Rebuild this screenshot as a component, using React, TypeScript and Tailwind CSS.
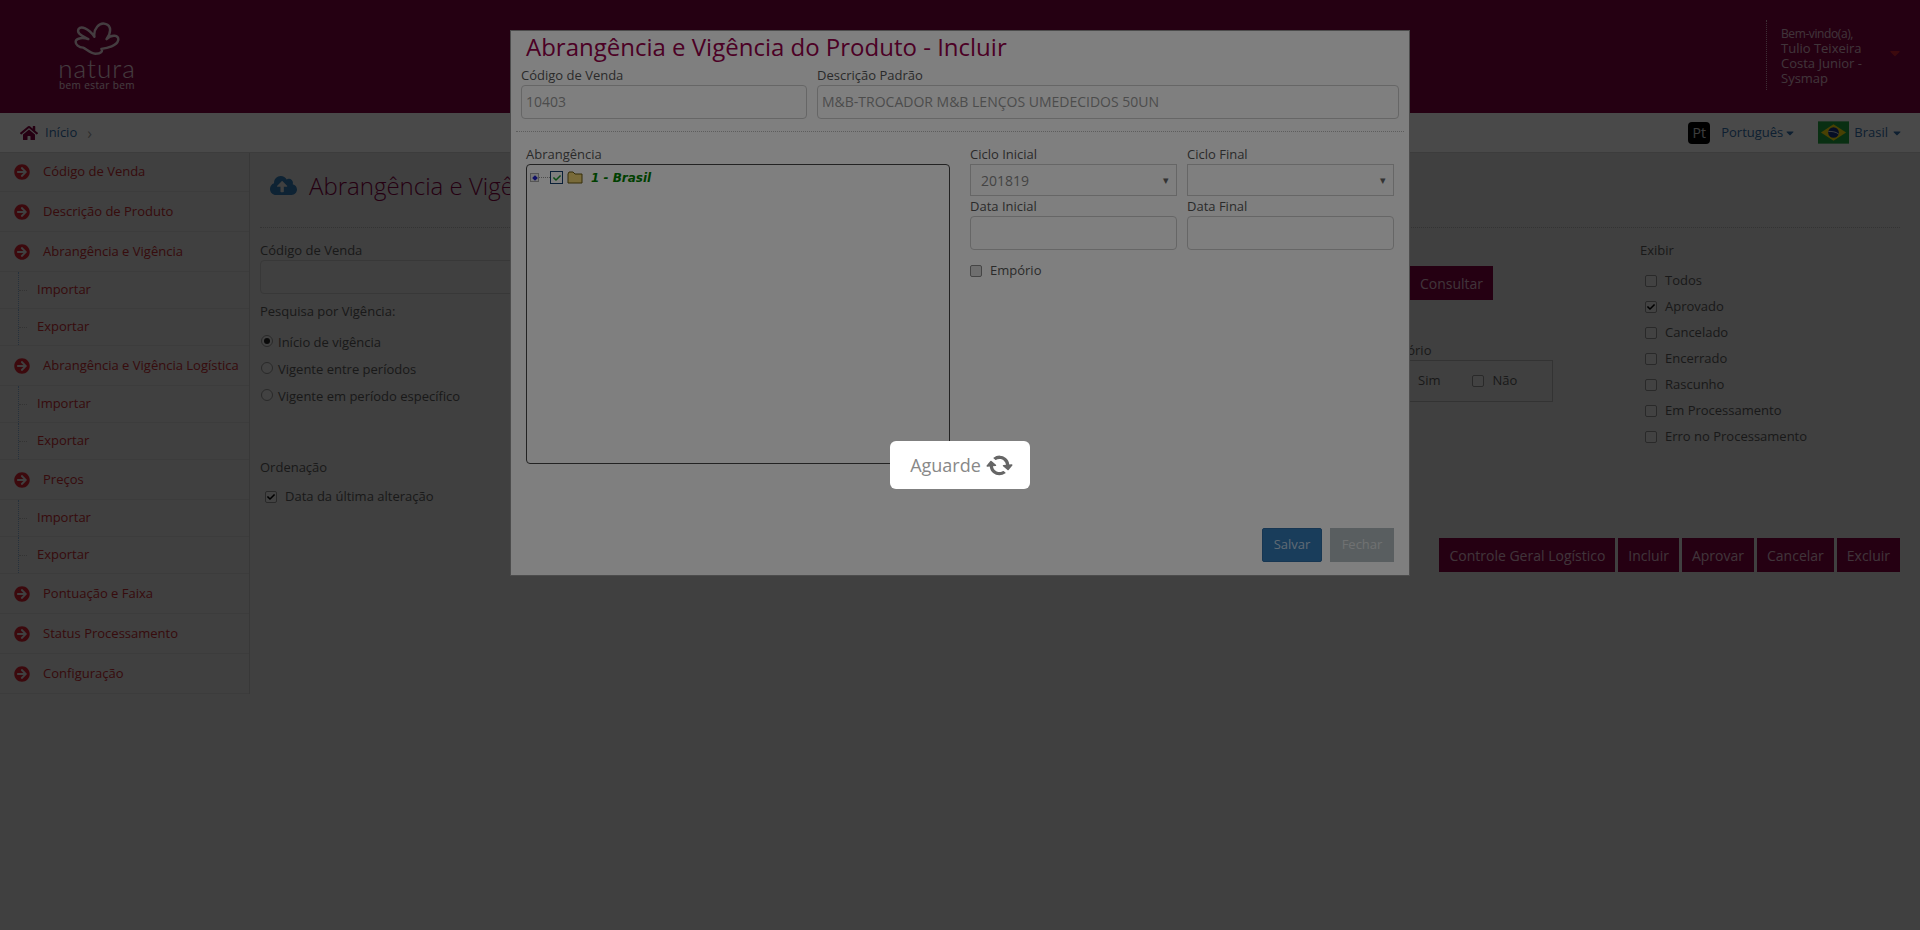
import React from "react";
import { FaArrowCircleRight, FaHome, FaCloudUploadAlt, FaCheck, FaCaretDown } from "react-icons/fa";

const font = { fontFamily: '"Open Sans", sans-serif' };

function Top({ label, first }: { label: string; first?: boolean }) {
  return (
    <div className={`flex items-center border-b border-[#c8c8c8] ${first ? "h-[39px] pb-[1px]" : "h-[40px]"}`}>
      <FaArrowCircleRight className="ml-[14px] text-[16px] text-[#c8202e]" />
      <span className="ml-[13px] text-[13px] text-[#b8282e] whitespace-nowrap">{label}</span>
    </div>
  );
}

function Sub({ label }: { label: string }) {
  return (
    <div className="flex items-center h-[37px] border-b border-[#c8c8c8] pl-[18px]">
      <span className="h-full border-l border-dotted border-[#7fa6c9]" />
      <span className="w-[8px] border-t border-dotted border-[#aaa]" />
      <span className="ml-[10px] text-[13px] text-[#b8282e]">{label}</span>
    </div>
  );
}

function Check({ on, className = "" }: { on?: boolean; className?: string }) {
  return (
    <span className={`inline-flex items-center justify-center w-[12px] h-[12px] rounded-[2px] border border-[#8a8a8a] bg-[#dcdcdc] shrink-0 ${className}`}>
      {on && <FaCheck className="text-[8px] text-black" />}
    </span>
  );
}

function Radio({ on, label }: { on?: boolean; label: string }) {
  return (
    <div className="flex items-center h-[27px] ml-[1px]">
      <span className="w-[12px] h-[12px] mb-[3px] rounded-full border border-[#8a8a8a] bg-[#dcdcdc] flex items-center justify-center">
        {on && <span className="w-[6px] h-[6px] rounded-full bg-[#222]" />}
      </span>
      <span className="ml-[5px] text-[13px] text-[#555]">{label}</span>
    </div>
  );
}

function Action({ children }: { children: React.ReactNode }) {
  return (
    <button className="h-[34px] px-[10px] bg-[#7e003d] text-white/70 text-[14px] whitespace-nowrap">{children}</button>
  );
}

function Logo() {
  return (
    <div className="w-[74px] ml-[60px] flex flex-col items-center text-white/80">
      <svg viewBox="215 62 151 108" className="w-[46px] h-[33px] mt-[22px]" fill="none" stroke="currentColor" strokeWidth="8" strokeLinejoin="round">
        <path d="M262 118 C245 108 222 100 230 85 C238 74 262 82 282 110 C278 85 298 62 318 68 C340 74 336 100 322 118 C338 102 364 104 360 122 C356 140 325 148 305 150 C310 158 305 166 285 166 C268 164 255 150 245 146 C232 146 218 136 221 124 C224 114 245 112 262 118 Z" />
      </svg>
      <span className="mt-[1px] text-[26px] leading-[24px] font-light tracking-[1px]" style={{ fontFamily: "Lato, sans-serif" }}>natura</span>
      <span className="text-[10px] leading-[11px] tracking-[0.4px] whitespace-nowrap">bem estar bem</span>
    </div>
  );
}

function Flag() {
  return (
    <svg viewBox="0 0 32 23" className="w-[31px] h-[23px]">
      <rect width="32" height="23" fill="#1f9e3f" />
      <path d="M16 3 L29 11.5 L16 20 L3 11.5 Z" fill="#f5d90a" />
      <circle cx="16" cy="11.5" r="5.5" fill="#16307e" />
      <path d="M10.8 10.5 C14 10 19 11 21.2 13" stroke="#fff" strokeWidth="0.8" fill="none" />
    </svg>
  );
}

function Field({ label, value, className = "" }: { label: string; value?: string; className?: string }) {
  return (
    <div className={className}>
      <div className="h-[20px] leading-[20px] text-[13px] text-[#555] whitespace-nowrap">{label}</div>
      <div className="h-[34px] leading-[32px] px-[4px] border border-[#ccc] rounded-[4px] text-[14px] text-[#999] whitespace-nowrap">{value}</div>
    </div>
  );
}

function SelectField({ label, value }: { label: string; value?: string }) {
  return (
    <div className="w-[207px]">
      <div className="h-[20px] leading-[20px] text-[13px] text-[#555]">{label}</div>
      <div className="h-[32px] flex items-center justify-between px-[10px] border border-[#ccc] text-[14px] text-[#888]">
        <span>{value}</span>
        <span className="text-[11px] text-[#666] mr-[-3px]">▾</span>
      </div>
    </div>
  );
}

const statuses = ["Todos", "Aprovado", "Cancelado", "Encerrado", "Rascunho", "Em Processamento", "Erro no Processamento"];

export default function App() {
  return (
    <div className="min-h-screen bg-[#d5d5d5] overflow-hidden" style={font}>
      <header className="h-[113px] bg-[#7e003d] flex items-start">
        <Logo />
        <div className="ml-auto mt-[20px] h-[70px] w-[154px] border-l border-dotted border-white/60 pl-[14px] flex text-white/70">
          <div className="w-[104px] pt-[7px]">
            <div className="text-[12px] leading-[14px] tracking-[-0.4px]">Bem-vindo(a),</div>
            <div className="text-[13px] leading-[15px]">Tulio Teixeira Costa Junior - Sysmap</div>
          </div>
          <FaCaretDown className="mt-[25px] ml-[2px] text-[16px] text-[#c8202e]" />
        </div>
      </header>

      <div className="h-[40px] bg-[#f6f6f6] border-b border-[#c8c8c8] flex items-center text-[13px]">
        <FaHome className="ml-[20px] text-[18px] text-[#7e003d]" />
        <span className="ml-[7px] text-[#2f6aa3]">Início</span>
        <span className="ml-[10px] text-[#999] text-[16px] leading-none">›</span>
        <div className="ml-auto flex items-center">
          <span className="w-[22px] h-[22px] rounded-[4px] bg-black text-white/80 text-[14px] leading-[22px] text-center">Pt</span>
          <span className="ml-[11px] text-[#2f6aa3]">Português</span>
          <FaCaretDown className="ml-[1px] text-[12px] text-[#2f6aa3]" />
          <span className="ml-[22px]"><Flag /></span>
          <span className="ml-[5px] text-[#2f6aa3]">Brasil</span>
          <FaCaretDown className="ml-[3px] mr-[17px] text-[12px] text-[#2f6aa3]" />
        </div>
      </div>

      <div className="flex items-start">
        <aside className="w-[250px] shrink-0 border-r border-[#bdbdbd]">
          <Top first label="Código de Venda" />
          <Top label="Descrição de Produto" />
          <Top label="Abrangência e Vigência" />
          <Sub label="Importar" />
          <Sub label="Exportar" />
          <Top label="Abrangência e Vigência Logística" />
          <Sub label="Importar" />
          <Sub label="Exportar" />
          <Top label="Preços" />
          <Sub label="Importar" />
          <Sub label="Exportar" />
          <Top label="Pontuação e Faixa" />
          <Top label="Status Processamento" />
          <Top label="Configuração" />
        </aside>

        <main className="flex-1 pl-[10px] pr-[20px]">
          <div className="h-[75px] border-b border-dotted border-[#aaa] flex items-center pb-[9px] pl-[10px]">
            <FaCloudUploadAlt className="text-[27px] text-[#2f75ad]" />
            <h1 className="ml-[12px] text-[24px] font-light text-[#7e003d]">Abrangência e Vigência do Produto</h1>
          </div>
          <div className="flex h-[310px]">
            <div className="w-[700px] pt-[12px]">
              <div className="h-[20px] leading-[20px] text-[13px] text-[#555]">Código de Venda</div>
              <div className="h-[34px] w-[400px] border border-[#bbb] rounded-[4px]" />
              <div className="mt-[7px] h-[20px] leading-[20px] text-[13px] text-[#555]">Pesquisa por Vigência:</div>
              <div className="mt-[8px]">
                <Radio on label="Início de vigência" />
                <Radio label="Vigente entre períodos" />
                <Radio label="Vigente em período específico" />
              </div>
              <div className="mt-[47px] h-[20px] leading-[20px] text-[13px] text-[#555]">Ordenação</div>
              <div className="mt-[10px] flex items-center ml-[5px]">
                <Check on />
                <span className="ml-[8px] text-[13px] text-[#555]">Data da última alteração</span>
              </div>
            </div>
            <div className="w-[680px] flex flex-col items-end pr-[87px]">
              <button className="mt-[38px] mr-[60px] h-[34px] px-[10px] bg-[#7e003d] text-white/70 text-[14px]">Consultar</button>
              <div className="mt-[40px] w-[200px] pl-[27px] h-[20px] leading-[20px] text-[13px] text-[#555]">Empório</div>
              <div className="h-[42px] w-[200px] border border-[#aaa] flex items-center pl-[64px] text-[13px] text-[#555]">
                <span>Sim</span>
                <Check className="ml-[32px]" />
                <span className="ml-[8px]">Não</span>
              </div>
            </div>
            <div className="pt-[12px]">
              <div className="h-[20px] leading-[20px] text-[13px] text-[#555]">Exibir</div>
              <div className="mt-[8px] ml-[5px]">
                {statuses.map((s) => (
                  <div key={s} className="flex items-center h-[26px]">
                    <Check on={s === "Aprovado"} />
                    <span className="ml-[8px] text-[13px] text-[#555]">{s}</span>
                  </div>
                ))}
              </div>
            </div>
          </div>
          <div className="flex justify-end gap-[3px]">
            <Action>Controle Geral Logístico</Action>
            <Action>Incluir</Action>
            <Action>Aprovar</Action>
            <Action>Cancelar</Action>
            <Action>Excluir</Action>
          </div>
        </main>
      </div>

      {/* modal backdrop and modal */}
      <div className="fixed inset-0 bg-black/40 flex justify-center items-start pt-[30px]">
        <div className="w-[900px] h-[546px] bg-white border border-black/40 flex flex-col">
          <h2 className="pl-[15px] h-[34px] leading-[32px] text-[24px] text-[#98004a] whitespace-nowrap">Abrangência e Vigência do Produto - Incluir</h2>
          <div className="flex gap-[10px] px-[10px]">
            <Field className="w-[286px]" label="Código de Venda" value="10403" />
            <Field className="w-[582px]" label="Descrição Padrão" value="M&B-TROCADOR M&B LENÇOS UMEDECIDOS 50UN" />
          </div>
          <div className="mx-[5px] mt-[12px] border-t border-dotted border-[#bbb]" />
          <div className="flex px-[15px] pt-[12px]">
            <div className="w-[424px]">
              <div className="h-[20px] leading-[20px] text-[13px] text-[#555]">Abrangência</div>
              <div className="h-[300px] border border-[#444] rounded-[4px] pl-[3px] pt-[6px] flex items-start">
                <span className="mt-[2px] w-[9px] h-[9px] border border-[#aaa] bg-[#eee] flex items-center justify-center">
                  <span className="w-[4px] h-[4px] rotate-45 bg-[#2222cc]" />
                </span>
                <span className="mt-[6px] w-[11px] border-t border-dotted border-[#999]" />
                <span className="w-[13px] h-[13px] border border-[#14406e] bg-white flex items-center justify-center">
                  <FaCheck className="text-[8px] text-[#1a9a2a]" />
                </span>
                <svg viewBox="0 0 16 13" className="ml-[4px] w-[16px] h-[13px]">
                  <path d="M1 3 L1 12 L15 12 L15 3 L8 3 L6 1 L2 1 Z" fill="#f2d775" stroke="#6a5a10" />
                </svg>
                <span className="ml-[8px] text-[12px] leading-[14px] font-bold italic text-[#008000]" style={{ fontFamily: '"DejaVu Sans", sans-serif' }}>1 - Brasil</span>
              </div>
            </div>
            <div className="ml-[20px] flex flex-col">
              <div className="flex gap-[10px]">
                <SelectField label="Ciclo Inicial" value="201819" />
                <SelectField label="Ciclo Final" />
              </div>
              <div className="flex gap-[10px]">
                <Field className="w-[207px]" label="Data Inicial" />
                <Field className="w-[207px]" label="Data Final" />
              </div>
              <div className="mt-[11px] flex items-center">
                <Check />
                <span className="ml-[8px] text-[13px] text-[#555]">Empório</span>
              </div>
            </div>
          </div>
          <div className="mt-auto mb-[13px] mr-[15px] flex justify-end gap-[8px]">
            <button className="h-[34px] w-[60px] rounded-[2px] border border-[#2e6da4] bg-[#337ab7] text-white/70 text-[13px]">Salvar</button>
            <button className="h-[34px] w-[64px] bg-[#b2bcc0] text-white/60 text-[13px]">Fechar</button>
          </div>
        </div>
      </div>

      {/* wait overlay */}
      <div className="fixed inset-0 bg-black/50 flex items-center justify-center">
        <div className="w-[140px] h-[48px] rounded-[6px] bg-white flex items-center justify-center pl-[1px]">
          <span className="text-[18px] text-[#888]">Aguarde</span>
          <svg viewBox="0 0 1792 1792" className="ml-[7px] w-[23px] h-[23px] text-[#666] rotate-[40deg]" fill="currentColor">
            <path d="M1639 1056q0 5-1 7-64 268-268 434.5t-478 166.5q-146 0-282.5-55t-243.5-157l-129 129q-19 19-45 19t-45-19-19-45v-448q0-26 19-45t45-19h448q26 0 45 19t19 45-19 45l-137 137q71 66 161 102t187 36q134 0 250-65t186-179q11-17 53-117 8-23 30-23h192q13 0 22.5 9.5t9.5 22.5zm25-800v448q0 26-19 45t-45 19h-448q-26 0-45-19t-19-45 19-45l138-138q-148-137-349-137-134 0-250 65t-186 179q-11 17-53 117-8 23-30 23h-199q-13 0-22.5-9.5t-9.5-22.5v-7q65-268 270-434.5t480-166.5q146 0 284 55.5t245 156.5l130-129q19-19 45-19t45 19 19 45z" />
          </svg>
        </div>
      </div>
    </div>
  );
}
